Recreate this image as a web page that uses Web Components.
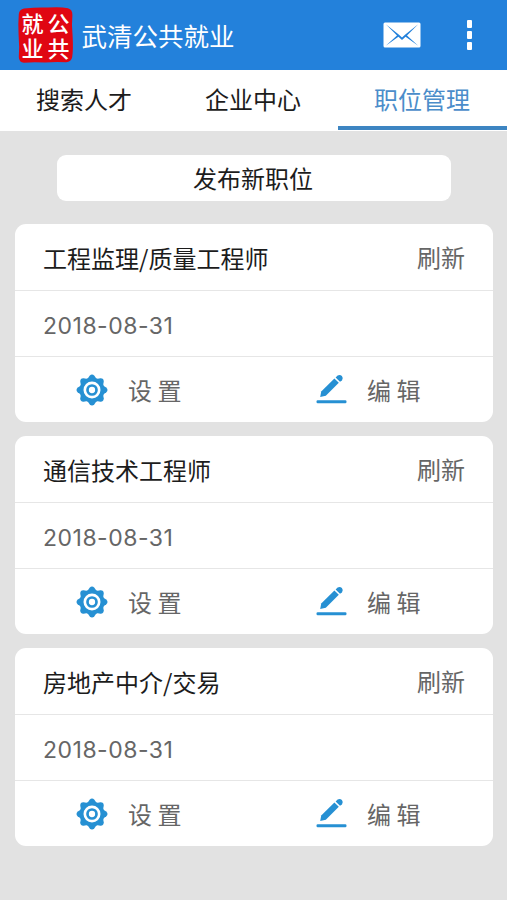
<!DOCTYPE html>
<html lang="zh-CN">
<head>
<meta charset="utf-8">
<title>武清公共就业</title>
<style>
    body {
        margin: 0;
        min-height: 900px;
        background: #e2e2e2;
        color: #1c1c1c;
        font-family: "Noto Sans CJK SC", sans-serif;
        font-size: 24px;
    }
    main {
        display: flex;
        flex-direction: column;
        gap: 14px;
        padding: 24px 14px 0 15px;
    }
    publish-button {
        margin: 0 42px 8.6px;
    }
</style>
</head>
<body>
<app-header>武清公共就业</app-header>
<tab-bar>
    <tab-item>搜索人才</tab-item>
    <tab-item>企业中心</tab-item>
    <tab-item active>职位管理</tab-item>
</tab-bar>
<main>
    <publish-button>发布新职位</publish-button>
    <job-card date="2018-08-31">工程监理/质量工程师</job-card>
    <job-card date="2018-08-31">通信技术工程师</job-card>
    <job-card date="2018-08-31">房地产中介/交易</job-card>
</main>

<script>
class BaseElement extends HTMLElement {
    constructor() {
        super();
        this.attachShadow({ mode: 'open' });
        const template = document.createElement('template');
        template.innerHTML = this.constructor.markup;
        this.shadowRoot.appendChild(template.content.cloneNode(true));
    }
}

class SealLogo extends BaseElement {
    static markup = `
        <style>
            :host {
                display: grid;
                grid-template-columns: 26px 26px;
                grid-template-rows: 25px 25px;
                justify-content: center;
                align-content: start;
                box-sizing: border-box;
                width: 55px;
                height: 56px;
                padding-top: 5px;
                background: #e00612;
                clip-path: path("M6 1.5Q20 0 30 0.6Q42 -0.4 50 1.2Q54.5 2.5 54.4 8Q53.4 18 54.6 29Q55.4 42 54.2 50Q53.4 55 48 55.2Q36 54.6 27 55.6Q15 54.8 6 55.8Q1 55.6 0.8 50Q1.6 40 0.6 28Q0 16 0.8 7Q1.2 2.5 6 1.5Z");
                color: #fff;
                /* Latin face first keeps the line boxes as low as the rows */
                font-family: "Liberation Sans", "Noto Sans CJK SC", sans-serif;
                font-size: 22px;
                font-weight: 500;
                line-height: 25px;
                text-align: center;
            }
        </style>
        <span>就</span><span>公</span>
        <span>业</span><span>共</span>
    `;
}

class AppHeader extends BaseElement {
    static markup = `
        <style>
            :host {
                display: flex;
                align-items: center;
                box-sizing: border-box;
                height: 70px;
                padding: 0 35px 0 18px;
                background: #2381db;
                color: #fff;
            }
            h1 {
                flex: 1;
                margin: 0 0 0 8.5px;
                font-size: 25.5px;
                font-weight: 400;
                line-height: 36px;
            }
            svg {
                display: block;
            }
            .mail {
                margin-right: 46px;
            }
        </style>
        <seal-logo></seal-logo>
        <h1><slot></slot></h1>
        <svg class="mail" width="38" height="26" viewBox="0 0 38 26">
            <rect x="0.5" y="0.5" width="37" height="25" rx="1.5" fill="#fff"/>
            <path d="M2.8 2.3L14 13.5L2.8 23.7L15.4 14.7L19 18L22.6 14.7L35.2 23.7L24 13.5L35.2 2.3L22 12.8L19 15.6L16 12.8Z" fill="#2381db"/>
        </svg>
        <svg width="5" height="30" viewBox="0 0 5 30" fill="#fff">
            <rect width="5" height="8" rx="1"/>
            <rect y="11" width="5" height="8" rx="1"/>
            <rect y="22" width="5" height="8" rx="1"/>
        </svg>
    `;
}

class TabBar extends BaseElement {
    static markup = `
        <style>
            :host {
                display: grid;
                grid-template-columns: repeat(3, 1fr);
                height: 60.5px;
                margin-bottom: 0.5px;
                background: #fff;
            }
        </style>
        <slot></slot>
    `;
}

class TabItem extends BaseElement {
    static markup = `
        <style>
            :host {
                box-sizing: border-box;
                display: block;
                height: 60px;
                padding-right: 1px;
                border-bottom: 4px solid transparent;
                line-height: 58px;
                text-align: center;
            }
            :host([active]) {
                border-color: #3d85c2;
                color: #4b8dca;
            }
        </style>
        <slot></slot>
    `;
}

class PublishButton extends BaseElement {
    static markup = `
        <style>
            :host {
                display: block;
                box-sizing: border-box;
                height: 46.4px;
                padding-right: 2px;
                border-radius: 9px;
                background: #fff;
                line-height: 46px;
                text-align: center;
            }
        </style>
        <slot></slot>
    `;
}

class JobCard extends BaseElement {
    static markup = `
        <style>
            :host {
                display: block;
                height: 198px;
                border-radius: 11px;
                background: #fff;
            }
            .row {
                display: flex;
                align-items: center;
                box-sizing: border-box;
                height: 66px;
                padding: 0 28px;
            }
            .row + .row {
                border-top: 1px solid #e6e6e6;
            }
            .title {
                flex: 1;
                line-height: 66px;
                padding-top: 3px;
            }
            .refresh, .date, .action {
                color: #666;
            }
            .date {
                font-family: Inter, sans-serif;
                font-size: 23px;
                letter-spacing: 0.5px;
                padding-top: 6px;
            }
            .actions {
                padding: 0;
            }
            .action {
                display: flex;
                align-items: center;
                flex: 1;
                gap: 20px;
                padding-left: 61px;
                white-space: nowrap;
            }
            svg {
                display: block;
                margin-top: 2px;
            }
        </style>
        <div class="row">
            <span class="title"><slot></slot></span>
            <span class="refresh">刷新</span>
        </div>
        <div class="row"><span class="date"></span></div>
        <div class="row actions">
            <span class="action">
                <svg width="32" height="32" viewBox="-16 -16 32 32" fill="none" stroke="#2690d3">
                    <circle r="10.5" stroke-width="4"/>
                    <circle r="4.5" stroke-width="2.7"/>
                    <g class="teeth" fill="#2690d3" stroke="none"></g>
                </svg>
                <span>设 置</span>
            </span>
            <span class="action">
                <svg width="32" height="32" viewBox="0 0 32 32" fill="#2690d3">
                    <path d="M5.2 23L6.2 17.4L19.4 4.4L23.8 8.8L10.8 21.8Z"/>
                    <path d="M20.6 3.4L22.6 1.6Q24.9 0.2 26.9 2Q28.7 4.2 27 6.4L25 7.8Z"/>
                    <rect x="1.5" y="26.2" width="30" height="3" rx="1.2"/>
                </svg>
                <span>编 辑</span>
            </span>
        </div>
    `;

    connectedCallback() {
        this.shadowRoot.querySelector('.date').innerText = this.getAttribute('date') || '';

        // eight teeth around the gear
        let teeth = '';
        for (let angle = 0; angle < 360; angle += 45) {
            teeth += `<path transform="rotate(${angle})" d="M-4.6 -11L-2.4 -14.2Q0 -16.8 2.4 -14.2L4.6 -11Z"/>`;
        }
        this.shadowRoot.querySelector('.teeth').innerHTML = teeth;
    }
}

customElements.define('seal-logo', SealLogo);
customElements.define('app-header', AppHeader);
customElements.define('tab-bar', TabBar);
customElements.define('tab-item', TabItem);
customElements.define('publish-button', PublishButton);
customElements.define('job-card', JobCard);
</script>
</body>
</html>
